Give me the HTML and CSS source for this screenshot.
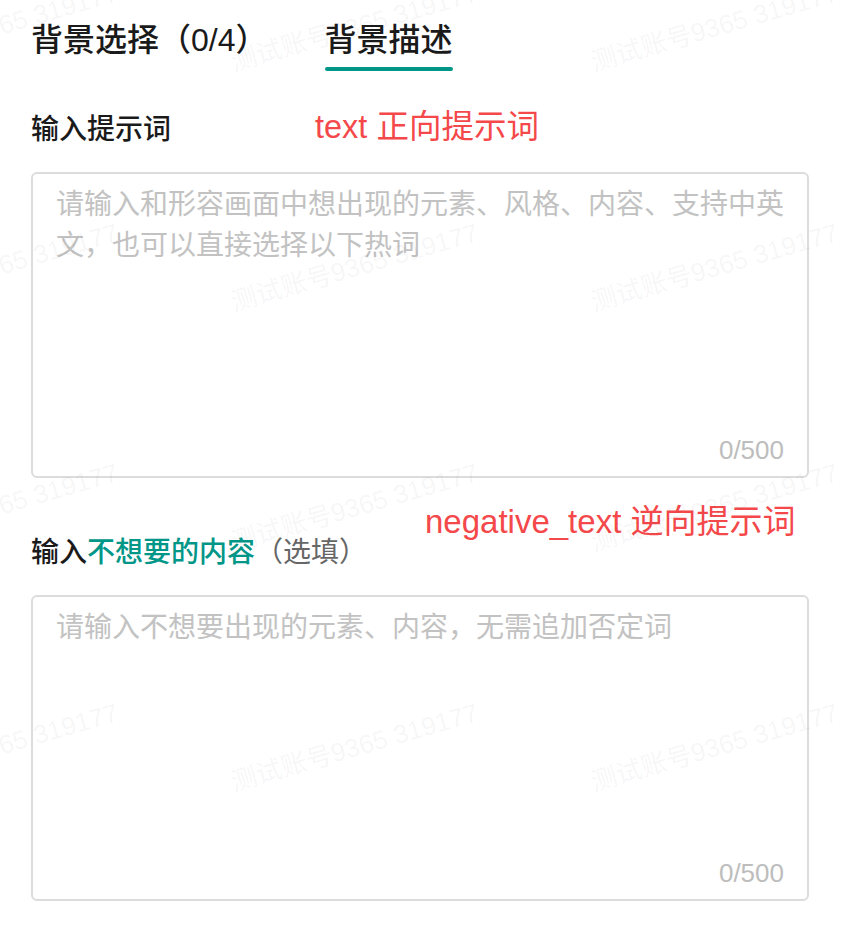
FILE: index.html
```html
<!DOCTYPE html>
<html lang="zh-CN">
<head>
<meta charset="utf-8">
<title>背景描述</title>
<link rel="stylesheet" href="styles.css">
</head>
<body>
<div class="page">
  <nav class="tabs">
    <div class="tab">背景选择（0/4）</div>
    <div class="tab tab-active">背景描述</div>
  </nav>

  <section class="block block-first">
    <div class="label-row">
      <span class="label">输入提示词</span>
      <span class="note note-pos">text 正向提示词</span>
    </div>
    <div class="field">
      <textarea class="input" placeholder="请输入和形容画面中想出现的元素、风格、内容、支持中英文，也可以直接选择以下热词"></textarea>
      <div class="counter">0/500</div>
    </div>
  </section>

  <section class="block block-second">
    <div class="label-row">
      <span class="label">输入<span class="accent">不想要的内容</span><span class="optional">（选填）</span></span>
      <span class="note note-neg">negative_text 逆向提示词</span>
    </div>
    <div class="field">
      <textarea class="input" placeholder="请输入不想要出现的元素、内容，无需追加否定词"></textarea>
      <div class="counter">0/500</div>
    </div>
  </section>
</div>

<div class="watermarks" aria-hidden="true">
  <span class="wm" style="left:-125px;top:75px">测试账号9365 319177</span>
  <span class="wm" style="left:235px;top:75px">测试账号9365 319177</span>
  <span class="wm" style="left:595px;top:75px">测试账号9365 319177</span>
  <span class="wm" style="left:-125px;top:315px">测试账号9365 319177</span>
  <span class="wm" style="left:235px;top:315px">测试账号9365 319177</span>
  <span class="wm" style="left:595px;top:315px">测试账号9365 319177</span>
  <span class="wm" style="left:-125px;top:555px">测试账号9365 319177</span>
  <span class="wm" style="left:235px;top:555px">测试账号9365 319177</span>
  <span class="wm" style="left:595px;top:555px">测试账号9365 319177</span>
  <span class="wm" style="left:-125px;top:795px">测试账号9365 319177</span>
  <span class="wm" style="left:235px;top:795px">测试账号9365 319177</span>
  <span class="wm" style="left:595px;top:795px">测试账号9365 319177</span>
</div>
</body>
</html>
```

FILE: styles.css
```css
* { box-sizing: border-box; }

html, body {
  margin: 0;
  padding: 0;
  background: #ffffff;
}

body {
  font-family: "Liberation Sans", "Noto Sans CJK SC", sans-serif;
  color: #1a1a1a;
  width: 846px;
  height: 938px;
  overflow: hidden;
  position: relative;
}

.page {
  width: 778px;
  margin-left: 31px;
}

.tabs {
  display: flex;
  gap: 57px;
  padding-top: 19px;
}

.tab {
  font-size: 32px;
  line-height: 42px;
  font-weight: 500;
  color: #1a1a1a;
  display: flex;
  flex-direction: column;
  align-items: stretch;
}

.tab-active::after {
  content: "";
  display: block;
  height: 4px;
  margin-top: 6px;
  border-radius: 2px;
  background: #009688;
}

.block-first { margin-top: 39px; }
.block-second { margin-top: 55px; }

.label-row {
  position: relative;
  height: 40px;
  display: flex;
  align-items: center;
  margin-bottom: 22px;
}

.label {
  font-size: 28px;
  line-height: 40px;
  font-weight: 500;
  color: #1a1a1a;
}

.accent { color: #009688; }

.optional {
  color: #666666;
  font-weight: 400;
}

.note {
  position: absolute;
  font-size: 32.5px;
  line-height: 40px;
  color: #f4484a;
  white-space: nowrap;
}

.note-pos { left: 284px; top: -3px; }
.note-neg { left: 394px; top: -31px; font-size: 33px; }

.field {
  height: 306px;
  border: 2px solid #dcdcdc;
  border-radius: 6px;
  display: flex;
  flex-direction: column;
  background: transparent;
}

.input {
  flex: 1;
  border: none;
  outline: none;
  resize: none;
  background: transparent;
  padding: 10px 20px 0 23px;
  font-family: "Liberation Sans", "Noto Sans CJK SC", sans-serif;
  font-size: 28px;
  line-height: 41px;
  color: #333;
}

.input::placeholder {
  color: #c2c2c2;
}

.counter {
  text-align: right;
  font-size: 26px;
  line-height: 34px;
  color: #bdbdbd;
  padding: 0 23px 9px 0;
}

.watermarks {
  position: absolute;
  inset: 0;
  pointer-events: none;
  overflow: hidden;
}

.wm {
  position: absolute;
  font-family: "Liberation Sans", "Noto Sans CJK SC", sans-serif;
  font-size: 26px;
  line-height: 26px;
  white-space: nowrap;
  color: rgba(0, 0, 0, 0.05);
  transform: translateY(-100%) rotate(-16deg);
  transform-origin: 0 100%;
}
```
